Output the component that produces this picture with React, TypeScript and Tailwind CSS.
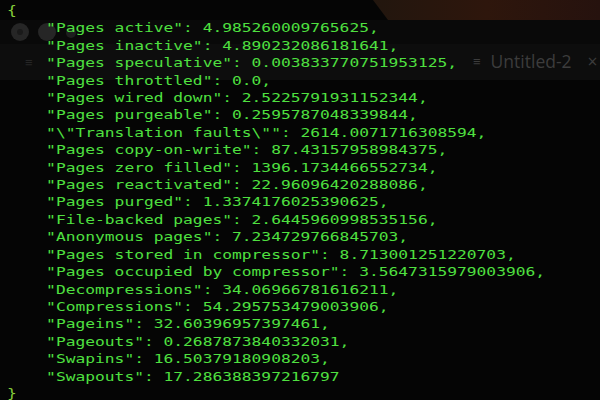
import React from "react";

const lines: string[] = [
  '"Pages active": 4.985260009765625,',
  '"Pages inactive": 4.890232086181641,',
  '"Pages speculative": 0.003833770751953125,',
  '"Pages throttled": 0.0,',
  '"Pages wired down": 2.5225791931152344,',
  '"Pages purgeable": 0.2595787048339844,',
  '"\\"Translation faults\\"": 2614.0071716308594,',
  '"Pages copy-on-write": 87.43157958984375,',
  '"Pages zero filled": 1396.1734466552734,',
  '"Pages reactivated": 22.96096420288086,',
  '"Pages purged": 1.3374176025390625,',
  '"File-backed pages": 2.6445960998535156,',
  '"Anonymous pages": 7.234729766845703,',
  '"Pages stored in compressor": 8.713001251220703,',
  '"Pages occupied by compressor": 3.5647315979003906,',
  '"Decompressions": 34.06966781616211,',
  '"Compressions": 54.295753479003906,',
  '"Pageins": 32.60396957397461,',
  '"Pageouts": 0.2687873840332031,',
  '"Swapins": 16.50379180908203,',
  '"Swapouts": 17.286388397216797',
];

export default function App() {
  return (
    <div className="relative w-[600px] h-[400px] overflow-hidden bg-[#050505]">
      {/* faint ghost of a window behind */}
      <div className="absolute inset-0 pointer-events-none">
        <svg width="600" height="400" className="absolute left-0 top-0">
          <defs>
            <linearGradient id="br" x1="0" y1="0" x2="1" y2="0">
              <stop offset="0" stopColor="#22160e" />
              <stop offset="0.5" stopColor="#2e160c" />
              <stop offset="1" stopColor="#26120e" />
            </linearGradient>
          </defs>
          <polygon points="373,0 600,0 600,20 388,20" fill="url(#br)" />
          <rect x="0" y="20" width="600" height="24" fill="#090909" />
          <rect x="0" y="44" width="600" height="36" fill="#0d0d0d" />
          <circle cx="20" cy="32" r="9" fill="#262626" />
          <circle cx="20" cy="32" r="3" fill="#1a1a1a" />
          <circle cx="47" cy="32" r="9" fill="#262626" />
          <circle cx="71" cy="33" r="5" fill="#1e1e1e" />
        </svg>
        <div className="absolute left-[473px] top-[51px] flex items-center text-[#3c3c3c] text-[17.5px] leading-[20px] font-['Open_Sans',sans-serif]">
          <span className="text-[13px] mr-[10px]">≡</span>
          <span>Untitled-2</span>
          <span className="ml-[16px]">×</span>
        </div>
        <div className="absolute left-[25px] top-[53px] text-[#262626] text-[13px] leading-[18px] font-['Open_Sans',sans-serif]">
          ≡
        </div>
      </div>

      <div className="relative pl-[7px] pt-[2px]">
        <div className="origin-top-left scale-x-[1.3] whitespace-pre font-['DejaVu_Sans_Mono',monospace] text-[12.5px] leading-[17.4px] text-[#4fe040]">
          <div className="text-[#86d03a]">{"{"}</div>
          {lines.map((l, i) => (
            <div key={i} className="pl-[30.1px]">
              {l}
            </div>
          ))}
          <div className="text-[#86d03a]">{"}"}</div>
        </div>
      </div>
    </div>
  );
}
